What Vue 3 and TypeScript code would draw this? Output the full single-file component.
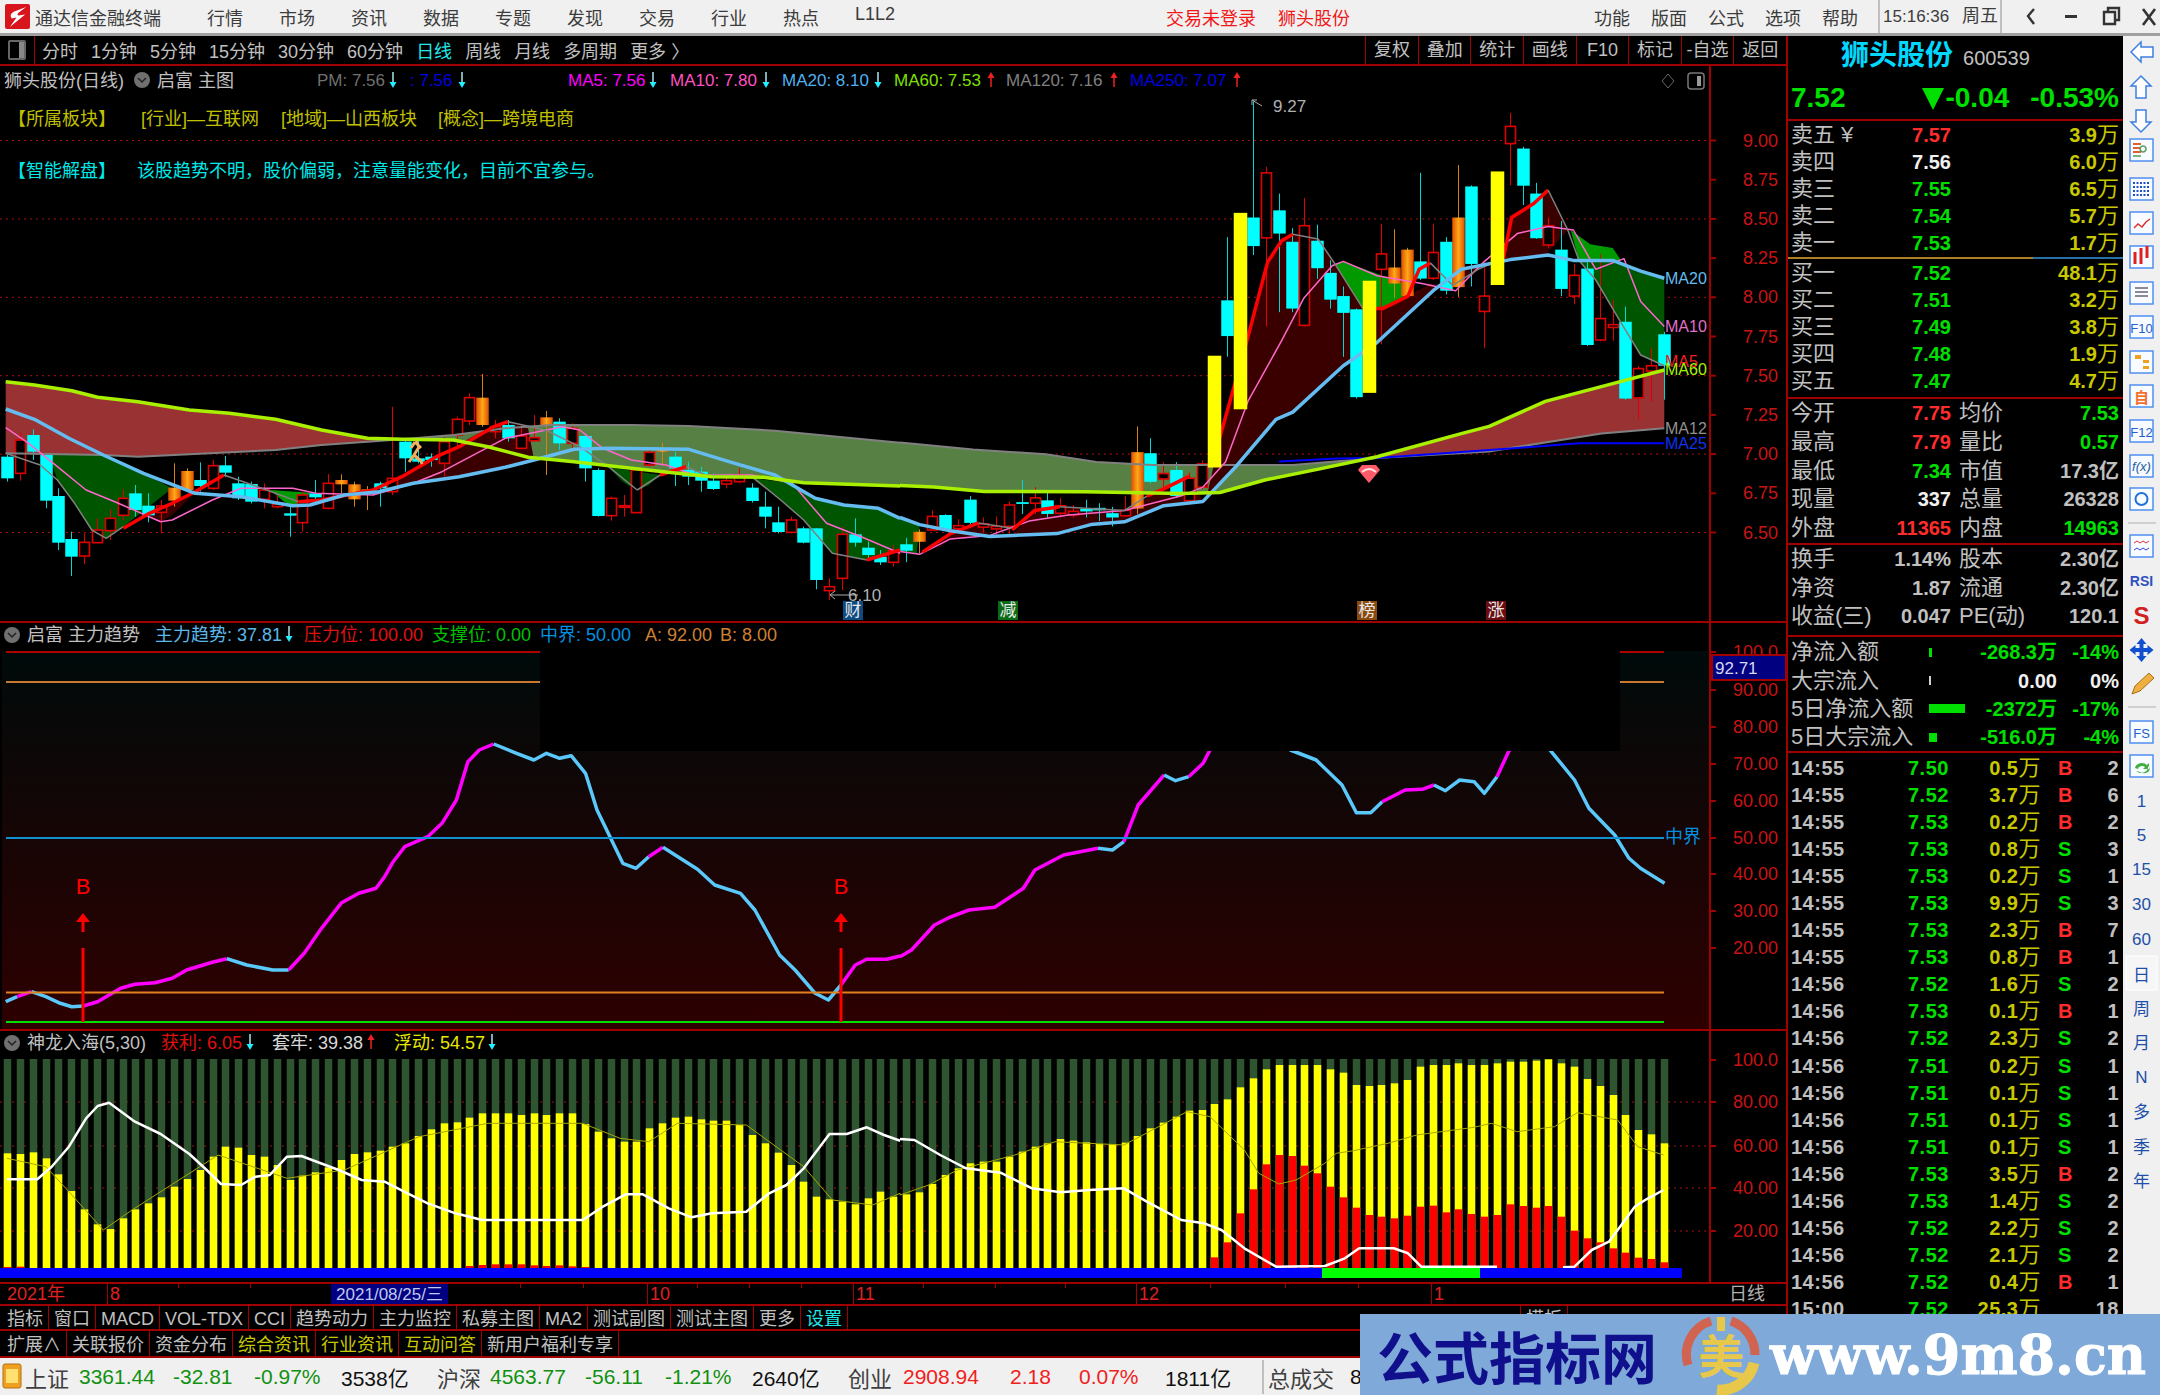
<template>
  <div class="terminal">
    <header class="titlebar">
      <svg class="logo" viewBox="0 0 26 26">
        <rect width="26" height="26" rx="2" fill="#d8141c" />
        <path d="M22 3 L9 8 Q4 11 7 15 L12 14 L5 24 L21 11 L14 12 Q12 11 14 9 Z" fill="#fff" />
      </svg>
      <span class="brand">通达信金融终端</span>
      <nav class="menu">
        <span v-for="m in menus" :key="m">{{ m }}</span>
      </nav>
      <span class="login">交易未登录</span>
      <span class="login stock-name">狮头股份</span>
      <nav class="menu menu-right">
        <span v-for="m in rightMenus" :key="m">{{ m }}</span>
      </nav>
      <span class="clock">15:16:36</span>
      <span class="weekday">周五</span>
      <svg class="win-btns" width="150" height="33" viewBox="0 0 150 33">
        <path d="M25 9 L19 16 L25 24" fill="none" stroke="#333" stroke-width="2.4" />
        <path d="M56 16.5 H68" stroke="#333" stroke-width="3" />
        <path d="M95 12 H106 V24 H95 Z M99 12 V8 H110 V20 H106" fill="none" stroke="#333" stroke-width="2.4" />
        <path d="M134 9 L146 25 M146 9 L134 25" stroke="#333" stroke-width="2.6" />
      </svg>
    </header>

    <div class="workspace">
      <section class="left-col">
        <div class="toolbar">
          <div class="tool-toggle"><span class="toggle-box"></span></div>
          <div class="periods">
            <span v-for="p in periods" :key="p" :class="{ 'c-cyan': p === '日线' }">{{ p }}</span>
            <span>更多 〉</span>
          </div>
          <div class="tool-btns">
            <span v-for="b in toolBtns" :key="b">{{ b }}</span>
          </div>
        </div>

        <svg class="chart" width="1786" height="1216" viewBox="0 66 1786 1216">
          <defs>
            <linearGradient id="subBg" x1="0" y1="0" x2="0" y2="1">
              <stop offset="0" stop-color="#000a0a" />
              <stop offset="1" stop-color="#2e0000" />
            </linearGradient>
            <linearGradient id="orangeBar" x1="0" y1="0" x2="1" y2="0">
              <stop offset="0" stop-color="#e05000" />
              <stop offset="0.5" stop-color="#ffa818" />
              <stop offset="1" stop-color="#e05000" />
            </linearGradient>
          </defs>

          <!-- main chart -->
          <line v-for="y in mainGrid" :key="'g' + y" x1="0" x2="1716" :y1="y" :y2="y" class="dots" />
          <polygon v-for="(f, i) in bands" :key="'b' + i" :points="f.pts" :fill="f.c" />
          <polygon v-for="(f, i) in mainFills" :key="'f' + i" :points="f.pts" :fill="f.c" />
          <g v-for="c in candles" :key="'c' + c.i">
            <line v-if="c.k !== 'y'" :x1="c.x" :x2="c.x" :y1="c.wt" :y2="c.wb" :stroke="c.wick" />
            <rect
              :x="c.x - c.w / 2"
              :y="c.top"
              :width="c.w"
              :height="c.h"
              :fill="c.fill"
              :stroke="c.k === 'r' ? '#e00000' : 'none'"
              :stroke-width="c.k === 'r' ? 1.6 : 0"
            />
          </g>
          <polyline v-for="(l, i) in mainLines" :key="'l' + i" :points="l.pts" :stroke="l.c" :stroke-width="l.w" class="ln" />
          <rect
            v-for="c in yellowCandles"
            :key="'y' + c.i"
            :x="c.x - c.w / 2"
            :y="c.top"
            :width="c.w"
            :height="c.h"
            fill="#ffff00"
          />
          <path d="M416 441 l3 6 l-5 8 l-5 7 m5 -7 l7 6 l1 3 m-7 -22 l-4 6 m4 -6 l6 6" fill="none" stroke="#f0b060" stroke-width="3" />
          <path d="M1362 465 H1376 L1380 470 L1369 483 L1358 470 Z" fill="#ff5a6a" />
          <path d="M1362 472 Q1369 466 1376 472" fill="none" stroke="#ffe0e0" stroke-width="2" />
          <path d="M1262 106 L1252 100 M1252 100 l0 5 m0 -5 l5 0" stroke="#aaa" fill="none" />
          <path d="M858 595 L830 595 m5 -4 l-5 4 l5 4" stroke="#aaa" fill="none" />
          <text x="1273" y="112" class="t17" fill="#b0b0b0">9.27</text>
          <text x="848" y="601" class="t17" fill="#b0b0b0">6.10</text>
          <g v-for="s in signals" :key="s.t">
            <rect :x="s.x - 10" y="601" width="20" height="19" :fill="s.c" />
            <text :x="s.x" y="616" text-anchor="middle" class="t17" fill="#e8e8e8">{{ s.t }}</text>
          </g>
          <text v-for="l in maLabels" :key="l.t" x="1665" :y="l.y" class="t16" :fill="l.c">{{ l.t }}</text>

          <!-- sub chart 1 -->
          <rect x="2" y="651" width="1708" height="378" fill="url(#subBg)" />
          <line x1="6" x2="1664" y1="652" y2="652" stroke="#b00000" stroke-width="2" />
          <line x1="6" x2="1664" y1="682" y2="682" stroke="#c87830" stroke-width="2" />
          <polyline v-for="(s, i) in trendLines" :key="'t' + i" :points="s.pts" :stroke="s.c" stroke-width="3.500" class="ln" />
          <rect x="540" y="623" width="1080" height="128" fill="#000" />
          <line x1="6" x2="1664" y1="838" y2="838" stroke="#1090d0" stroke-width="2" />
          <line x1="6" x2="1664" y1="992.5" y2="992.5" stroke="#e08020" stroke-width="2" />
          <line x1="6" x2="1664" y1="1022" y2="1022" stroke="#00e000" stroke-width="2" />
          <g v-for="x in buyMarks" :key="'m' + x">
            <line :x1="x" :x2="x" y1="948" y2="1022" stroke="#f00" stroke-width="3" />
            <path :d="`M${x} 913 l-7 9 h5.500 v10 h3 v-10 h5.500 Z`" fill="#f00" />
            <text :x="x" y="894" text-anchor="middle" class="t20" fill="#f00">B</text>
          </g>
          <text x="1665" y="843" class="t18" fill="#0090e0">中界</text>

          <!-- sub chart 2 -->
          <line v-for="y in sub2Grid" :key="'s' + y" x1="0" x2="1710" :y1="y" :y2="y" class="dots" />
          <g v-for="b in sub2Bars" :key="'v' + b.x">
            <rect :x="b.x - 3.75" y="1059" width="7.500" height="209" fill="#2e5530" />
            <rect :x="b.x - 3.75" :y="b.yellow" width="7.500" :height="1268 - b.yellow" fill="#ffff00" />
            <rect v-if="b.red" :x="b.x - 3.75" :y="b.red" width="7.500" :height="1268 - b.red" fill="#ff0000" />
          </g>
          <polyline :points="floatLine" stroke="#a8a800" stroke-width="1" class="ln" />
          <polyline v-for="(s, i) in whiteLines" :key="'w' + i" :points="s" stroke="#fff" stroke-width="2.500" class="ln" />
          <rect x="0" y="1268" width="1682" height="10" fill="#0000ff" />
          <rect x="1322" y="1268" width="158" height="10" fill="#00ff00" />

          <!-- axes and frames -->
          <line x1="1710" x2="1710" y1="66" y2="1282" class="frame" />
          <line x1="0" x2="1786" y1="622" y2="622" class="frame" />
          <line x1="0" x2="1786" y1="1030" y2="1030" class="frame" />
          <g v-for="a in axisLabels" :key="'a' + a.t + a.y">
            <line x1="1711" x2="1716" :y1="a.y" :y2="a.y" class="frame" />
            <text x="1778" :y="a.y + 6" text-anchor="end" class="t18" fill="#c81414">{{ a.t }}</text>
          </g>
          <rect x="1712" y="655" width="74" height="25" fill="#000080" stroke="#a00000" stroke-width="2" />
          <text x="1715" y="674" class="t17" fill="#d8d8f0">92.71</text>

          <!-- legends -->
          <text v-for="t in legends" :key="t.x + t.t" :x="t.x" :y="t.y" :class="t.s ?? 't17'" :fill="t.c">{{ t.t }}</text>
          <g v-for="a in arrows" :key="'r' + a.x + a.y">
            <path v-if="a.up" :d="`M${a.x} ${a.y + 15} V${a.y + 4}`" stroke="#f02020" stroke-width="1.500" />
            <path v-if="a.up" :d="`M${a.x - 3.5} ${a.y + 6} L${a.x} ${a.y} L${a.x + 3.5} ${a.y + 6} Z`" fill="#f02020" />
            <path v-if="!a.up" :d="`M${a.x} ${a.y} V${a.y + 11}`" stroke="#a8e8f0" stroke-width="1.500" />
            <path v-if="!a.up" :d="`M${a.x - 3.5} ${a.y + 10} L${a.x} ${a.y + 16} L${a.x + 3.5} ${a.y + 10} Z`" fill="#20f0ff" />
          </g>
          <g v-for="y in [80, 635, 1043]" :key="'k' + y">
            <circle :cx="y === 80 ? 142 : 12" :cy="y" r="8" fill="#707070" />
            <path :d="`M${(y === 80 ? 142 : 12) - 4} ${y - 2} l4 4 l4 -4`" stroke="#222" stroke-width="1.500" fill="none" />
          </g>
          <path d="M1668 74 l6 7 l-6 7 l-6 -7 Z" stroke="#666" fill="none" />
          <rect x="1688" y="73" width="16" height="16" rx="3" fill="none" stroke="#777" stroke-width="1.500" />
          <rect x="1697" y="76" width="4" height="10" fill="#999" />
        </svg>

        <div class="date-row">
          <em v-for="x in dateTicks" :key="x" class="date-tick" :style="{ left: x + 'px' }"></em>
          <span class="date-year">2021年</span>
          <span class="date-mark m8">8</span>
          <span class="date-cur">2021/08/25/三</span>
          <span class="date-mark m10">10</span>
          <span class="date-mark m11">11</span>
          <span class="date-mark m12">12</span>
          <span class="date-mark m1">1</span>
          <span class="date-kind">日线</span>
        </div>
        <div class="tabs">
          <span v-for="t in tabs1" :key="t" :class="{ 'c-cyan': t === '设置' }">{{ t }}</span>
          <span class="tab-tail">模板</span>
        </div>
        <div class="tabs tabs-last">
          <span v-for="t in tabs2" :key="t" :class="{ 'c-yellow': yellowTabs.includes(t) }">{{ t }}</span>
        </div>
      </section>

      <aside class="quote">
        <div class="q-name"><span class="q-title">狮头股份</span><span class="q-code">600539</span></div>
        <div class="q-price">
          <span>7.52</span>
          <span class="q-change"><svg width="22" height="24" viewBox="0 0 22 24"><path d="M0 2 H22 L11 24 Z" fill="#00e000" /></svg>-0.04</span>
          <span>-0.53%</span>
        </div>
        <div class="q-sec q-asks">
          <div v-for="r in asks" :key="r[0]" class="q-row">
            <span class="lb">{{ r[0] }}</span>
            <b class="px" :class="r[3]">{{ r[1] }}</b>
            <b class="vol c-yellow">{{ r[2] }}<i>万</i></b>
          </div>
        </div>
        <div class="q-sec q-bids">
          <div v-for="r in bids" :key="r[0]" class="q-row">
            <span class="lb">{{ r[0] }}</span>
            <b class="px c-green">{{ r[1] }}</b>
            <b class="vol c-yellow">{{ r[2] }}<i>万</i></b>
          </div>
        </div>
        <div class="q-sec q-stats">
          <div v-for="r in stats1" :key="r[0]" class="stat-row">
            <div><span class="lb">{{ r[0] }}</span><b :class="r[2]">{{ r[1] }}</b></div>
            <div><span class="lb">{{ r[3] }}</span><b :class="r[5]">{{ r[4] }}</b></div>
          </div>
        </div>
        <div class="q-sec q-stats2">
          <div v-for="r in stats2" :key="r[0]" class="stat-row stat-tight">
            <div><span class="lb">{{ r[0] }}</span><b class="c-gray">{{ r[1] }}</b></div>
            <div><span class="lb">{{ r[2] }}</span><b class="c-gray">{{ r[3] }}</b></div>
          </div>
        </div>
        <div class="q-sec q-flow">
          <div v-for="r in flows" :key="r.l" class="flow-row">
            <span class="lb">{{ r.l }}</span>
            <span class="flow-val">
              <em class="flow-bar" :style="{ width: r.w + 'px', background: r.bar }"></em>
              <b :class="r.c">{{ r.v }}</b>
            </span>
            <b :class="r.c">{{ r.p }}</b>
          </div>
        </div>
        <div class="ticks">
          <div v-for="(t, i) in ticks" :key="i" class="tick">
            <b class="c-gray">{{ t[0] }}</b>
            <b class="c-green">{{ t[1] }}</b>
            <b class="c-yellow tick-vol">{{ t[2] }}<i>万</i></b>
            <b class="tick-bs" :class="t[3] === 'B' ? 'c-red' : 'c-green'">{{ t[3] }}</b>
            <b class="c-gray tick-n">{{ t[4] }}</b>
          </div>
        </div>
      </aside>

      <aside class="sidebar">
        <svg width="37" height="1322" viewBox="0 36 37 1322" class="side-svg">
          <g fill="#fff" stroke="#3f7fe0" stroke-width="1.500">
            <path d="M8 52 L18 42 V47 H30 V57 H18 V62 Z" />
            <path d="M18 76 L28 86 H23 V98 H13 V86 H8 Z" />
            <path d="M18 132 L28 122 H23 V110 H13 V122 H8 Z" />
          </g>
          <g fill="#f8fbff" stroke="#4f8ff0" stroke-width="1.500">
            <rect v-for="y in iconBoxes" :key="y" x="7" :y="y - 11" width="23" height="22" />
          </g>
          <path d="M10 144 h8 m-8 4 h8 m-8 4 h8" stroke="#e06030" stroke-width="2" />
          <path d="M20 152 a3 3 0 1 1 0.100 0 M10 156 h8" stroke="#50a050" stroke-width="1.500" fill="none" />
          <path d="M10 183 h17 m-17 4 h17 m-17 4 h17 m-17 4 h17" stroke="#2050c0" stroke-width="2" stroke-dasharray="2 1.500" />
          <path d="M11 228 l4 -4 l4 3 l4 -5 l4 -3" stroke="#e03030" fill="none" stroke-width="1.500" />
          <path d="M12 252 v12 m6 -16 v16 m6 -18 v12" stroke="#e02020" stroke-width="3" />
          <path d="M12 288 h13 m-13 4 h13 m-13 4 h13" stroke="#667" stroke-width="1.500" />
          <text x="18.500" y="333" text-anchor="middle" class="side-t" fill="#2060d0">F10</text>
          <path d="M12 355 h6 v4 h-6 Z M20 360 h6 v3 h-6 Z M20 366 h6 v3 h-6 Z" fill="#f0a020" />
          <text x="18.500" y="403" text-anchor="middle" class="side-c" fill="#f07030">自</text>
          <text x="18.500" y="437" text-anchor="middle" class="side-t" fill="#2060d0">F12</text>
          <text x="18.500" y="471" text-anchor="middle" class="side-t" fill="#2060a0" font-style="italic">f(x)</text>
          <circle cx="18.500" cy="499" r="6" fill="none" stroke="#2070e0" stroke-width="2" />
          <line x1="5" x2="33" y1="523" y2="523" stroke="#b0b0b0" />
          <path d="M11 543 l3 -2 l3 2 l3 -2 l3 2 l3 -2" stroke="#e03030" fill="none" />
          <path d="M11 550 l3 -2 l3 2 l3 -2 l3 2 l3 -2" stroke="#3040e0" fill="none" />
          <text x="18.500" y="586" text-anchor="middle" class="side-r" fill="#3050c0">RSI</text>
          <text x="18.500" y="624" text-anchor="middle" class="side-s" fill="#d02020">S</text>
          <path d="M18.500 638 l5 6 h-3 v4 h4 v-3 l6 5 l-6 5 v-3 h-4 v4 h3 l-5 6 l-5 -6 h3 v-4 h-4 v3 l-6 -5 l6 -5 v3 h4 v-4 h-3 Z" fill="#1050d0" />
          <path d="M9 694 l3 -8 l14 -13 l5 5 l-14 13 Z" fill="#f0b040" stroke="#a07020" />
          <line x1="5" x2="33" y1="707" y2="707" stroke="#b0b0b0" />
          <rect x="7" y="721" width="23" height="22" fill="#f8fbff" stroke="#4f8ff0" stroke-width="1.500" />
          <text x="18.500" y="738" text-anchor="middle" class="side-t" fill="#2060d0">FS</text>
          <rect x="7" y="755" width="23" height="22" fill="#f8fbff" stroke="#4f8ff0" stroke-width="1.500" />
          <path d="M12 768 a7 6 0 0 1 12 -3 l2 -2 v6 h-6 l2 -2 a4 3 0 0 0 -7 2 Z M25 766 a7 6 0 0 1 -12 5 l4 1 a4 3 0 0 0 8 -6 Z" fill="#40b040" />
          <rect x="3" y="956" width="31" height="34" fill="#f6f6f6" stroke="#fff" />
          <text v-for="t in sideLabels" :key="t.t" x="18.500" :y="t.y + 7" text-anchor="middle" class="side-n" fill="#1e4fa8">{{ t.t }}</text>
        </svg>
      </aside>
    </div>

    <footer class="statusbar">
      <svg class="status-icon" width="20" height="26" viewBox="0 0 20 26">
        <rect x="1" y="1" width="18" height="24" rx="2" fill="#f0a020" stroke="#b07010" />
        <rect x="4" y="6" width="12" height="14" fill="#ffe070" />
      </svg>
      <span v-for="(s, i) in statusItems" :key="i" :class="s[1]">{{ s[0] }}</span>
    </footer>

    <div class="watermark">
      <span class="wm-cn">公式指标网</span>
      <svg class="wm-logo" width="80" height="80" viewBox="0 0 80 80">
        <path d="M7 50 A35 35 0 0 1 30 6" fill="none" stroke="#d06450" stroke-width="9" />
        <path d="M50 6 A35 35 0 0 1 74 40" fill="none" stroke="#d06450" stroke-width="9" />
        <path d="M73 48 A35 35 0 0 1 36 75" fill="none" stroke="#e8c84a" stroke-width="11" />
        <text x="40" y="58" text-anchor="middle" class="wm-glyph" fill="#e8c84a">美</text>
        <rect x="36" y="2" width="8" height="14" fill="#e8c84a" />
      </svg>
      <span class="wm-url">www.9m8.cn</span>
    </div>
  </div>
</template>

<script setup lang="ts">
type Fn = (x: number, y: number) => [number, number]

const z7: Fn = (x, y) => [x / 1.742, 360 + y / 3]
const z8: Fn = (x, y) => [900 + x / 1.782, 80 + y / 2.8]
const z9: Fn = (x, y) => [x / 1.742, 620 + y / 3]
const z10: Fn = (x, y) => [900 + x / 1.742, 620 + y / 3]
const z11: Fn = (x, y) => [x / 1.742, 1030 + y / 3]
const z12: Fn = (x, y) => [900 + x / 1.742, 1030 + y / 3]

const pts = (fn: Fn, flat: number[]) => {
  const out: string[] = []
  for (let i = 0; i < flat.length; i += 2) {
    const [x, y] = fn(flat[i], flat[i + 1])
    out.push(`${x.toFixed(1)},${y.toFixed(1)}`)
  }
  return out.join(' ')
}

const menus = ['行情', '市场', '资讯', '数据', '专题', '发现', '交易', '行业', '热点', 'L1L2']
const rightMenus = ['功能', '版面', '公式', '选项', '帮助']
const periods = ['分时', '1分钟', '5分钟', '15分钟', '30分钟', '60分钟', '日线', '周线', '月线', '多周期']
const toolBtns = ['复权', '叠加', '统计', '画线', 'F10', '标记', '-自选', '返回']
const tabs1 = ['指标', '窗口', 'MACD', 'VOL-TDX', 'CCI', '趋势动力', '主力监控', '私募主图', 'MA2', '测试副图', '测试主图', '更多', '设置']
const tabs2 = ['扩展∧', '关联报价', '资金分布', '综合资讯', '行业资讯', '互动问答', '新用户福利专享']
const yellowTabs = ['综合资讯', '行业资讯', '互动问答']
const dateTicks = [178, 250, 520, 583, 697, 749, 801, 923, 995, 1065, 1210, 1285, 1358]

// candle: kind, body top, body bottom, wick top, wick bottom (zoomed coordinates)
type Raw = [string, number, number, number, number]
const rawLeft: Raw[] = [
  ['c', 290, 355, 285, 365], ['r', 240, 340, 215, 362], ['c', 225, 275, 208, 300], ['c', 285, 422, 285, 445],
  ['c', 408, 548, 385, 570], ['c', 537, 590, 515, 648], ['r', 547, 588, 520, 612], ['r', 510, 548, 475, 550],
  ['r', 475, 512, 447, 540], ['r', 415, 466, 388, 480], ['c', 400, 450, 375, 470], ['c', 437, 466, 400, 487],
  ['r', 438, 457, 420, 520], ['o', 383, 422, 310, 440], ['o', 333, 390, 325, 395], ['c', 360, 378, 307, 395],
  ['r', 317, 385, 300, 390], ['c', 316, 338, 288, 350], ['c', 370, 415, 350, 420], ['c', 372, 425, 365, 430],
  ['r', 390, 418, 370, 445], ['r', 432, 440, 400, 445], ['c', 460, 467, 440, 530], ['r', 405, 488, 395, 515],
  ['c', 400, 412, 360, 420], ['r', 370, 445, 342, 448], ['o', 360, 373, 343, 400], ['o', 373, 418, 365, 440],
  ['o', 388, 402, 378, 450], ['c', 370, 385, 365, 440], ['r', 355, 395, 140, 405], ['c', 245, 295, 235, 335],
  ['c', 295, 305, 235, 310], ['c', 290, 300, 280, 320], ['r', 245, 310, 230, 350], ['r', 178, 225, 170, 265],
  ['r', 113, 183, 100, 195], ['o', 113, 195, 42, 200], ['r', 200, 215, 180, 235], ['c', 195, 235, 180, 245],
  ['r', 228, 265, 195, 267], ['r', 233, 242, 165, 245], ['o', 172, 198, 153, 345], ['c', 185, 250, 175, 270],
  ['r', 205, 250, 190, 270], ['c', 228, 325, 220, 365], ['c', 330, 468, 325, 470], ['r', 415, 467, 410, 482],
  ['r', 437, 442, 405, 470], ['r', 330, 458, 325, 460], ['r', 277, 315, 270, 320], ['o', 267, 275, 248, 318],
  ['c', 290, 325, 275, 378], ['c', 330, 350, 305, 375], ['c', 335, 362, 320, 395], ['c', 362, 387, 340, 390],
  ['r', 362, 372, 345, 385], ['r', 345, 365, 325, 370], ['c', 383, 423, 370, 428], ['c', 440, 470, 395, 505],
  ['c', 487, 516, 440, 520], ['r', 480, 517, 470, 520], ['c', 505, 548, 500, 550], ['c', 505, 660, 505, 688],
  ['r', 680, 692, 655, 720], ['r', 523, 655, 500, 690], ['c', 523, 548, 475, 560], ['c', 563, 585, 545, 595],
  ['c', 590, 607, 570, 615], ['r', 572, 607, 555, 620],
]
const rawRight: Raw[] = [
  ['c', 1300, 1318, 1282, 1350], ['o', 1265, 1293, 1258, 1325], ['r', 1222, 1260, 1205, 1262], ['c', 1218, 1258, 1216, 1260],
  ['r', 1248, 1256, 1230, 1262], ['c', 1175, 1240, 1165, 1245], ['r', 1243, 1252, 1225, 1268], ['r', 1250, 1257, 1222, 1275],
  ['r', 1190, 1250, 1180, 1275], ['c', 1182, 1187, 1120, 1215], ['r', 1170, 1185, 1140, 1215], ['c', 1177, 1215, 1155, 1225],
  ['r', 1192, 1213, 1170, 1225], ['r', 1208, 1218, 1190, 1225], ['c', 1200, 1208, 1175, 1225], ['c', 1198, 1205, 1185, 1235],
  ['c', 1213, 1225, 1195, 1250], ['r', 1205, 1220, 1165, 1222], ['o', 1042, 1200, 970, 1215], ['c', 1045, 1125, 1003, 1130],
  ['r', 1102, 1117, 1070, 1150], ['c', 1092, 1165, 1070, 1170], ['r', 1115, 1178, 1100, 1180], ['r', 1075, 1140, 1065, 1145],
  ['y', 772, 1085, 772, 1085], ['c', 617, 717, 440, 775], ['y', 372, 922, 372, 922], ['c', 385, 465, 60, 490],
  ['r', 260, 442, 243, 690], ['c', 365, 430, 318, 650], ['c', 453, 640, 415, 650], ['r', 408, 687, 330, 690],
  ['c', 450, 527, 405, 557], ['c', 540, 615, 505, 640], ['c', 605, 652, 578, 775], ['c', 642, 888, 640, 892],
  ['y', 562, 876, 562, 876], ['r', 487, 530, 403, 740], ['o', 525, 570, 418, 610], ['o', 475, 605, 470, 608],
  ['c', 508, 556, 260, 560], ['r', 483, 555, 402, 560], ['c', 453, 590, 440, 600], ['o', 385, 580, 238, 607],
  ['c', 298, 515, 295, 578], ['r', 605, 648, 510, 750], ['y', 256, 574, 256, 574], ['r', 130, 178, 92, 295],
  ['c', 192, 296, 187, 350], ['c', 318, 443, 288, 445], ['r', 408, 462, 385, 470], ['c', 475, 585, 395, 605],
  ['r', 547, 605, 515, 628], ['c', 528, 742, 510, 745], ['r', 668, 728, 488, 732], ['r', 685, 693, 615, 730],
  ['c', 677, 892, 635, 895], ['r', 808, 890, 800, 950], ['r', 800, 815, 750, 902], ['c', 712, 800, 705, 895],
]

const toCandle = (r: Raw, i: number, fn: Fn) => {
  const [, top] = fn(0, r[1])
  const [, bot] = fn(0, r[2])
  const [, wt] = fn(0, r[3])
  const [, wb] = fn(0, r[4])
  const k = r[0]
  const fills: Record<string, string> = { c: '#00ffff', r: '#000', o: 'url(#orangeBar)', y: '#ffff00' }
  const wicks: Record<string, string> = { c: '#00d8d8', r: '#e00000', o: '#d88010', y: '#ffff00' }
  const w = k === 'r' ? 10 : k === 'y' ? 13.5 : 12.5
  return { i, k, x: Math.round(7 + 12.845 * i) + 0.5, top, h: bot - top, wt, wb, w, fill: fills[k], wick: wicks[k] }
}

const candles = [
  ...rawLeft.map((r, i) => toCandle(r, i, z7)),
  ...rawRight.map((r, i) => toCandle(r, i + 70, z8)),
].filter((c) => c.k !== 'y')
const yellowCandles = rawRight.map((r, i) => toCandle(r, i + 70, z8)).filter((c) => c.k === 'y')

const mainGrid = [140.5, 218.9, 297.3, 375.7, 454.1, 532.5]
const sub2Grid = [1102, 1146, 1188, 1231]

const bands = [
  { c: '#993333', pts: pts(z7, [10, 65, 60, 75, 125, 92, 170, 112, 240, 125, 330, 150, 400, 160, 480, 178, 560, 210, 640, 235, 700, 238, 640, 245, 560, 255, 480, 270, 330, 283, 240, 290, 180, 285, 10, 280]) },
  { c: '#568044', pts: pts(z7, [700, 238, 790, 225, 880, 205, 960, 195, 1100, 195, 1200, 198, 1350, 212, 1568, 248, 1568, 378, 1400, 368, 1330, 352, 1240, 350, 1180, 340, 1100, 325, 1000, 305, 920, 292, 850, 260, 790, 240]) },
  { c: '#568044', pts: pts(z8, [0, 1015, 130, 1035, 260, 1048, 350, 1070, 450, 1078, 600, 1078, 700, 1078, 835, 1062, 750, 1088, 650, 1120, 570, 1155, 500, 1158, 330, 1153, 150, 1152, 60, 1140, 0, 1135]) },
  { c: '#993333', pts: pts(z8, [835, 1062, 1050, 1040, 1150, 1015, 1250, 990, 1362, 975, 1362, 812, 1270, 850, 1150, 900, 1050, 970, 1000, 990, 850, 1055]) },
]

const mainFills = [
  { c: '#005500', pts: pts(z7, [85, 285, 180, 285, 250, 340, 300, 385, 215, 500, 185, 535, 160, 510, 130, 430, 100, 360]) },
  { c: '#3a0000', pts: pts(z7, [215, 505, 300, 430, 390, 345, 340, 398, 300, 465, 280, 485, 250, 470]) },
  { c: '#009900', pts: pts(z7, [470, 390, 540, 398, 530, 425, 510, 437, 495, 425]) },
  { c: '#3a0000', pts: pts(z7, [660, 385, 760, 290, 860, 195, 885, 185, 920, 205, 930, 298, 880, 322, 800, 350, 720, 370]) },
  { c: '#005500', pts: pts(z7, [1060, 322, 1150, 345, 1130, 375, 1110, 392, 1085, 365]) },
  { c: '#005500', pts: pts(z7, [1310, 355, 1380, 368, 1420, 415, 1470, 435, 1530, 445, 1568, 475, 1568, 570, 1510, 600, 1450, 580, 1400, 480, 1360, 420]) },
  { c: '#005500', pts: pts(z8, [0, 1225, 35, 1245, 30, 1325, 0, 1320]) },
  { c: '#3a0000', pts: pts(z8, [60, 1320, 90, 1270, 140, 1240, 160, 1275, 90, 1285]) },
  { c: '#3a0000', pts: pts(z8, [200, 1275, 240, 1205, 285, 1195, 400, 1205, 470, 1145, 515, 1110, 540, 1180, 470, 1192, 400, 1237, 340, 1245, 280, 1270]) },
  { c: '#3a0000', pts: pts(z8, [545, 1180, 570, 1000, 620, 700, 650, 520, 680, 450, 700, 432, 745, 445, 775, 515, 825, 640, 860, 640, 905, 605, 945, 570, 985, 575, 1030, 530, 1075, 500, 1085, 380, 1130, 345, 1155, 308, 1190, 420, 1150, 490, 1090, 503, 1000, 530, 950, 590, 850, 735, 790, 800, 700, 930, 670, 950, 600, 1080]) },
  { c: '#009900', pts: pts(z8, [775, 515, 790, 508, 860, 548, 905, 575, 900, 605, 860, 640, 825, 640]) },
  { c: '#009900', pts: pts(z8, [1195, 420, 1230, 460, 1270, 470, 1285, 505, 1210, 505]) },
  { c: '#005500', pts: pts(z8, [1210, 505, 1270, 505, 1320, 535, 1362, 555, 1362, 800, 1320, 770, 1285, 680, 1240, 560]) },
]

const RED = '#ff0000'
const GREY = '#808080'
const mainLines = [
  // thin MA120 / MA250
  { c: GREY, w: 2, pts: pts(z7, [10, 280, 180, 285, 240, 290, 330, 283, 480, 270, 560, 255, 640, 245, 700, 238, 790, 225, 880, 205, 960, 195, 1100, 195, 1200, 198, 1350, 212, 1568, 248]) },
  { c: GREY, w: 2, pts: pts(z8, [0, 1015, 130, 1035, 260, 1048, 350, 1070, 450, 1078, 700, 1078, 850, 1058, 1050, 1040, 1150, 1015, 1250, 990, 1362, 975]) },
  { c: '#0000ff', w: 2, pts: pts(z8, [675, 1068, 780, 1060, 850, 1058, 1000, 1042, 1100, 1030, 1210, 1017, 1362, 1017]) },
  // MA10
  { c: '#ff66cc', w: 1.5, pts: pts(z7, [10, 203, 50, 250, 100, 320, 150, 390, 200, 425, 280, 485, 300, 480, 370, 420, 420, 385, 510, 385, 550, 400, 650, 405, 720, 370, 770, 335, 830, 280, 880, 235, 980, 200, 1010, 210, 1050, 265, 1100, 300, 1160, 315, 1210, 345, 1310, 345, 1380, 370, 1440, 490, 1500, 530, 1568, 580]) },
  { c: '#ff66cc', w: 1.5, pts: pts(z8, [0, 1320, 35, 1328, 90, 1285, 160, 1275, 230, 1235, 300, 1218, 400, 1205, 500, 1165, 540, 1140, 580, 1070, 620, 900, 680, 730, 720, 610, 770, 520, 790, 508, 850, 548, 930, 570, 990, 590, 1040, 510, 1100, 430, 1155, 410, 1200, 420, 1240, 530, 1290, 500, 1320, 620, 1362, 690]) },
  // MA5, grey while falling, red while rising
  { c: GREY, w: 1.5, pts: pts(z7, [10, 280, 70, 315, 100, 360, 130, 430, 160, 510, 185, 535, 215, 500]) },
  { c: RED, w: 3.5, pts: pts(z7, [215, 505, 260, 460, 300, 430, 340, 395, 390, 345]) },
  { c: GREY, w: 1.5, pts: pts(z7, [390, 345, 440, 375, 480, 400, 520, 425]) },
  { c: RED, w: 3.5, pts: pts(z7, [520, 425, 560, 420, 650, 390, 700, 350, 760, 290, 800, 260, 860, 200, 885, 185]) },
  { c: GREY, w: 1.5, pts: pts(z7, [885, 185, 950, 210, 1010, 260, 1060, 320, 1110, 390]) },
  { c: GREY, w: 1.5, pts: pts(z7, [1110, 390, 1150, 345, 1195, 320, 1230, 345, 1310, 350, 1360, 420, 1400, 480, 1450, 580, 1510, 600]) },
  { c: RED, w: 3.5, pts: pts(z7, [1150, 345, 1195, 320]) },
  { c: RED, w: 3.5, pts: pts(z7, [1510, 600, 1568, 570]) },
  { c: RED, w: 3.5, pts: pts(z8, [40, 1322, 90, 1270, 140, 1240]) },
  { c: GREY, w: 1.5, pts: pts(z8, [140, 1240, 200, 1255]) },
  { c: RED, w: 3.5, pts: pts(z8, [200, 1260, 240, 1205, 285, 1195]) },
  { c: GREY, w: 1.5, pts: pts(z8, [285, 1195, 400, 1205, 440, 1165]) },
  { c: RED, w: 3.5, pts: pts(z8, [440, 1165, 470, 1145, 515, 1110]) },
  { c: RED, w: 3.5, pts: pts(z8, [570, 1000, 620, 720, 655, 510, 680, 450, 700, 432]) },
  { c: GREY, w: 1.5, pts: pts(z8, [700, 432, 745, 445, 775, 515, 825, 640]) },
  { c: RED, w: 3.5, pts: pts(z8, [825, 640, 860, 640, 905, 605, 925, 530, 945, 512]) },
  { c: GREY, w: 1.5, pts: pts(z8, [945, 512, 985, 575, 1030, 530, 1075, 500]) },
  { c: RED, w: 3.5, pts: pts(z8, [1075, 500, 1090, 385, 1130, 345, 1155, 308]) },
  { c: GREY, w: 1.5, pts: pts(z8, [1155, 308, 1190, 420, 1210, 505, 1240, 560, 1285, 680, 1320, 770, 1362, 800]) },
  // MA20
  { c: '#64bcf0', w: 3.5, pts: pts(z7, [10, 147, 60, 178, 120, 235, 180, 285, 250, 340, 340, 400, 420, 410, 510, 437, 540, 435, 600, 405, 660, 395, 720, 370, 800, 350, 880, 322, 930, 300, 1000, 268, 1060, 265, 1200, 268, 1270, 305, 1350, 345, 1420, 415, 1470, 435, 1530, 445, 1568, 475]) },
  { c: '#64bcf0', w: 3.5, pts: pts(z8, [0, 1225, 35, 1245, 90, 1262, 160, 1278, 280, 1270, 340, 1245, 400, 1237, 470, 1192, 540, 1180, 600, 1080, 670, 950, 700, 930, 790, 800, 850, 735, 950, 590, 1000, 530, 1088, 503, 1155, 490, 1200, 505, 1270, 505, 1320, 535, 1362, 555]) },
  // MA60
  { c: '#a8f000', w: 3.5, pts: pts(z7, [10, 65, 60, 75, 125, 92, 170, 112, 240, 125, 330, 150, 400, 160, 480, 178, 560, 210, 640, 235, 700, 238, 790, 240, 850, 260, 920, 292, 1000, 305, 1100, 325, 1180, 340, 1240, 350, 1330, 352, 1400, 368, 1568, 378]) },
  { c: '#a8f000', w: 3.5, pts: pts(z8, [0, 1135, 60, 1140, 150, 1152, 330, 1153, 500, 1158, 570, 1155, 650, 1120, 750, 1088, 850, 1055, 1000, 990, 1050, 970, 1150, 900, 1270, 850, 1362, 812]) },
]

const signals = [
  { t: '财', x: 853, c: '#0d4a80' },
  { t: '减', x: 1008, c: '#0b6a14' },
  { t: '榜', x: 1367, c: '#8a4a10' },
  { t: '涨', x: 1496, c: '#6a0c10' },
]

const maLabels = [
  { t: 'MA20', y: 284, c: '#64bcf0' },
  { t: 'MA10', y: 332, c: '#e070c8' },
  { t: 'MA5', y: 367, c: '#f02020' },
  { t: 'MA60', y: 375, c: '#a8f000' },
  { t: 'MA12', y: 434, c: '#909090' },
  { t: 'MA25', y: 449, c: '#1030f0' },
]

const PINK = '#ff00ff'
const SKY = '#5ac8fa'
const trendLines = [
  { c: SKY, pts: pts(z9, [10, 1145, 30, 1130]) },
  { c: PINK, pts: pts(z9, [30, 1130, 55, 1115]) },
  { c: SKY, pts: pts(z9, [55, 1115, 80, 1130, 105, 1150, 125, 1160, 145, 1158]) },
  { c: PINK, pts: pts(z9, [145, 1158, 170, 1145, 210, 1105, 235, 1093, 270, 1088, 300, 1075, 325, 1050, 370, 1027, 395, 1016]) },
  { c: SKY, pts: pts(z9, [395, 1016, 430, 1035, 475, 1050, 503, 1050]) },
  { c: PINK, pts: pts(z9, [503, 1050, 530, 1000, 560, 925, 595, 848, 625, 820, 655, 805, 670, 770, 685, 725, 705, 680, 745, 650, 770, 610, 795, 540, 815, 425, 835, 390, 860, 372]) },
  { c: SKY, pts: pts(z9, [860, 372, 900, 400, 930, 420, 952, 400, 975, 415, 995, 407, 1020, 460, 1040, 570, 1085, 730, 1108, 745, 1130, 710]) },
  { c: PINK, pts: pts(z9, [1130, 710, 1155, 682]) },
  { c: SKY, pts: pts(z9, [1155, 682, 1215, 748, 1245, 795, 1290, 820, 1315, 870, 1358, 1005, 1385, 1050, 1420, 1120, 1443, 1140, 1465, 1095]) },
  { c: PINK, pts: pts(z9, [1465, 1095, 1490, 1035, 1510, 1018, 1545, 1018, 1568, 1008]) },
  { c: PINK, pts: pts(z10, [0, 1010, 20, 990, 60, 915, 85, 893, 120, 870, 165, 862, 215, 805, 235, 750, 285, 705, 345, 685]) },
  { c: SKY, pts: pts(z10, [345, 685, 370, 690, 390, 665]) },
  { c: PINK, pts: pts(z10, [390, 665, 415, 555, 460, 465]) },
  { c: SKY, pts: pts(z10, [460, 465, 480, 482, 503, 470]) },
  { c: PINK, pts: pts(z10, [503, 470, 528, 430, 540, 390, 570, 335, 595, 270]) },
  { c: SKY, pts: pts(z10, [595, 270, 640, 295, 680, 390, 725, 420, 770, 495, 795, 578, 820, 578, 840, 545]) },
  { c: PINK, pts: pts(z10, [840, 545, 880, 510, 910, 508, 930, 495]) },
  { c: SKY, pts: pts(z10, [930, 495, 950, 512, 975, 480, 1000, 485, 1018, 520, 1040, 470]) },
  { c: PINK, pts: pts(z10, [1040, 470, 1060, 395, 1085, 340]) },
  { c: SKY, pts: pts(z10, [1085, 340, 1130, 385, 1175, 480, 1200, 565, 1245, 645, 1270, 715, 1290, 745, 1332, 790]) },
]
const buyMarks = [83, 841]

const yellowTops = [
  370, 372, 367, 385, 433, 483, 538, 583, 597, 565, 538, 520, 502, 470, 447, 420, 380, 350, 353, 375,
  380, 405, 450, 437, 427, 412, 390, 372, 367, 362, 350, 340, 318, 298, 280, 277, 263, 250, 250, 250,
  255, 250, 255, 250, 250, 282, 305, 325, 335, 335, 295, 280, 263, 260, 268, 272, 272, 285, 315, 340,
  368, 405, 455, 500, 508, 515, 523, 505, 485, 500,
  493, 487, 462, 435, 415, 400, 395, 395, 380, 365, 350, 340, 327, 332, 337, 342, 342, 338, 318, 295,
  278, 260, 242, 240, 222, 208, 172, 145, 118, 105, 105, 105, 105, 118, 128, 165, 168, 165, 160, 150,
  110, 105, 105, 100, 105, 105, 100, 95, 95, 92, 88, 100, 110, 147, 168, 195, 255, 300, 313, 340,
]
const redTops: Record<number, number> = {
  0: 711, 1: 710, 36: 708, 37: 705, 38: 703, 39: 703, 40: 703, 41: 706, 42: 708, 43: 706, 44: 709, 45: 711,
  94: 682, 95: 637, 96: 550, 97: 478, 98: 403, 99: 375, 100: 378, 101: 407, 102: 430, 103: 470, 104: 502,
  105: 533, 106: 555, 107: 560, 108: 565, 109: 557, 110: 530, 111: 527, 112: 547, 113: 538, 114: 552,
  115: 560, 116: 555, 117: 523, 118: 528, 119: 533, 120: 528, 121: 560, 122: 602, 123: 625, 124: 637,
  125: 655, 126: 668, 127: 683, 128: 687, 129: 697,
}
const sub2Bars = yellowTops.map((v, i) => ({
  x: Math.round(7 + 12.845 * i) + 0.5,
  yellow: 1030 + v / 3,
  red: redTops[i] ? 1030 + redTops[i] / 3 : 0,
}))

const floatLine = [
  pts(z11, [12, 385, 80, 410, 120, 485, 180, 600, 230, 540, 380, 375, 500, 445, 600, 420, 730, 320, 850, 280, 1015, 280, 1080, 325, 1130, 335, 1180, 280, 1300, 285, 1400, 410, 1450, 510, 1520, 525, 1568, 490]),
  pts(z12, [0, 495, 50, 465, 100, 420, 200, 375, 270, 335, 390, 345, 500, 245, 540, 260, 600, 360, 625, 430, 660, 462, 690, 450, 740, 400, 760, 370, 790, 362, 850, 340, 900, 315, 1000, 292, 1030, 280, 1075, 305, 1140, 290, 1180, 248, 1250, 270, 1285, 350, 1330, 375]),
].join(' ')
const whiteLines = [
  pts(z11, [12, 448, 65, 448, 90, 410, 120, 350, 150, 265, 170, 228, 190, 218, 235, 275, 280, 312, 330, 372, 360, 420, 385, 462, 420, 465, 445, 440, 470, 435, 500, 380, 525, 378, 590, 420, 630, 450, 670, 455, 710, 490, 745, 520, 790, 548, 840, 570, 1015, 570, 1050, 530, 1090, 493, 1120, 493, 1165, 535, 1205, 562, 1240, 550, 1300, 545, 1340, 490, 1370, 465, 1400, 415, 1445, 312, 1475, 312, 1510, 292, 1540, 315, 1568, 332]),
  pts(z12, [0, 327, 25, 330, 70, 375, 115, 415, 175, 428, 230, 475, 280, 487, 330, 480, 390, 475, 430, 515, 490, 570, 530, 580, 560, 600, 600, 655, 655, 710, 740, 708, 775, 685, 800, 655, 860, 655, 885, 670, 908, 710, 1040, 710]),
  pts(z12, [1155, 712, 1175, 710, 1205, 660, 1235, 635, 1280, 530, 1300, 508, 1330, 480]),
]

const axisLabels = [
  { t: '9.00', y: 140.5 }, { t: '8.75', y: 179.7 }, { t: '8.50', y: 218.9 }, { t: '8.25', y: 258.1 },
  { t: '8.00', y: 297.3 }, { t: '7.75', y: 336.5 }, { t: '7.50', y: 375.7 }, { t: '7.25', y: 414.9 },
  { t: '7.00', y: 454.1 }, { t: '6.75', y: 493.3 }, { t: '6.50', y: 532.5 },
  { t: '100.0', y: 652 }, { t: '90.00', y: 690 }, { t: '80.00', y: 727 }, { t: '70.00', y: 764 }, { t: '60.00', y: 801 },
  { t: '50.00', y: 838 }, { t: '40.00', y: 874 }, { t: '30.00', y: 911 }, { t: '20.00', y: 948 },
  { t: '100.0', y: 1060 }, { t: '80.00', y: 1102 }, { t: '60.00', y: 1146 }, { t: '40.00', y: 1188 }, { t: '20.00', y: 1231 },
]

const legends: { x: number; y: number; t: string; c: string; s?: string }[] = [
  { x: 4, y: 87, t: '狮头股份(日线)', c: '#c0c0c0', s: 't18' },
  { x: 157, y: 87, t: '启富 主图', c: '#c0c0c0', s: 't18' },
  { x: 317, y: 86, t: 'PM: 7.56', c: '#707070' },
  { x: 410, y: 86, t: ': 7.56', c: '#0000e0' },
  { x: 568, y: 86, t: 'MA5: 7.56', c: '#ff00ff' },
  { x: 670, y: 86, t: 'MA10: 7.80', c: '#ff50c0' },
  { x: 782, y: 86, t: 'MA20: 8.10', c: '#50b0f0' },
  { x: 894, y: 86, t: 'MA60: 7.53', c: '#80e000' },
  { x: 1006, y: 86, t: 'MA120: 7.16', c: '#808080' },
  { x: 1130, y: 86, t: 'MA250: 7.07', c: '#0000e0' },
  { x: 8, y: 125, t: '【所属板块】', c: '#c0c000', s: 't18' },
  { x: 141, y: 125, t: '[行业]—互联网', c: '#c0c000', s: 't18' },
  { x: 281, y: 125, t: '[地域]—山西板块', c: '#c0c000', s: 't18' },
  { x: 438, y: 125, t: '[概念]—跨境电商', c: '#c0c000', s: 't18' },
  { x: 8, y: 177, t: '【智能解盘】', c: '#00e8e8', s: 't18' },
  { x: 137, y: 177, t: '该股趋势不明，股价偏弱，注意量能变化，目前不宜参与。', c: '#00e8e8', s: 't18' },
  { x: 27, y: 641, t: '启富 主力趋势', c: '#c0c0c0', s: 't18' },
  { x: 155, y: 641, t: '主力趋势: 37.81', c: '#5bb8e8', s: 't18' },
  { x: 304, y: 641, t: '压力位: 100.00', c: '#e01010', s: 't18' },
  { x: 432, y: 641, t: '支撑位: 0.00', c: '#00c000', s: 't18' },
  { x: 540, y: 641, t: '中界: 50.00', c: '#0090e0', s: 't18' },
  { x: 645, y: 641, t: 'A: 92.00', c: '#d08030', s: 't18' },
  { x: 720, y: 641, t: 'B: 8.00', c: '#d08030', s: 't18' },
  { x: 27, y: 1049, t: '神龙入海(5,30)', c: '#c0c0c0', s: 't18' },
  { x: 161, y: 1049, t: '获利: 6.05', c: '#e01010', s: 't18' },
  { x: 272, y: 1049, t: '套牢: 39.38', c: '#d8d8d8', s: 't18' },
  { x: 394, y: 1049, t: '浮动: 54.57', c: '#e8e800', s: 't18' },
]

const arrows = [
  { x: 393, y: 72, up: false }, { x: 462, y: 72, up: false }, { x: 653, y: 72, up: false }, { x: 766, y: 72, up: false },
  { x: 878, y: 72, up: false }, { x: 991, y: 72, up: true }, { x: 1114, y: 72, up: true }, { x: 1237, y: 72, up: true },
  { x: 289, y: 626, up: false }, { x: 250, y: 1034, up: false }, { x: 371, y: 1034, up: true }, { x: 492, y: 1034, up: false },
]

const asks = [
  ['卖五 ¥', '7.57', '3.9', 'c-red'], ['卖四', '7.56', '6.0', 'c-white'], ['卖三', '7.55', '6.5', 'c-green'],
  ['卖二', '7.54', '5.7', 'c-green'], ['卖一', '7.53', '1.7', 'c-green'],
]
const bids = [['买一', '7.52', '48.1'], ['买二', '7.51', '3.2'], ['买三', '7.49', '3.8'], ['买四', '7.48', '1.9'], ['买五', '7.47', '4.7']]
const stats1 = [
  ['今开', '7.75', 'c-red', '均价', '7.53', 'c-green'],
  ['最高', '7.79', 'c-red', '量比', '0.57', 'c-green'],
  ['最低', '7.34', 'c-green', '市值', '17.3亿', 'c-gray'],
  ['现量', '337', 'c-white', '总量', '26328', 'c-gray'],
  ['外盘', '11365', 'c-red', '内盘', '14963', 'c-green'],
]
const stats2 = [
  ['换手', '1.14%', '股本', '2.30亿'],
  ['净资', '1.87', '流通', '2.30亿'],
  ['收益(三)', '0.047', 'PE(动)', '120.1'],
]
const flows = [
  { l: '净流入额', w: 3, bar: '#00e000', v: '-268.3万', p: '-14%', c: 'c-green' },
  { l: '大宗流入', w: 2, bar: '#d0d0d0', v: '0.00', p: '0%', c: 'c-white' },
  { l: '5日净流入额', w: 36, bar: '#00e000', v: '-2372万', p: '-17%', c: 'c-green' },
  { l: '5日大宗流入', w: 8, bar: '#00e000', v: '-516.0万', p: '-4%', c: 'c-green' },
]
const ticks = [
  ['14:55', '7.50', '0.5', 'B', '2'], ['14:55', '7.52', '3.7', 'B', '6'], ['14:55', '7.53', '0.2', 'B', '2'],
  ['14:55', '7.53', '0.8', 'S', '3'], ['14:55', '7.53', '0.2', 'S', '1'], ['14:55', '7.53', '9.9', 'S', '3'],
  ['14:55', '7.53', '2.3', 'B', '7'], ['14:55', '7.53', '0.8', 'B', '1'], ['14:56', '7.52', '1.6', 'S', '2'],
  ['14:56', '7.53', '0.1', 'B', '1'], ['14:56', '7.52', '2.3', 'S', '2'], ['14:56', '7.51', '0.2', 'S', '1'],
  ['14:56', '7.51', '0.1', 'S', '1'], ['14:56', '7.51', '0.1', 'S', '1'], ['14:56', '7.51', '0.1', 'S', '1'],
  ['14:56', '7.53', '3.5', 'B', '2'], ['14:56', '7.53', '1.4', 'S', '2'], ['14:56', '7.52', '2.2', 'S', '2'],
  ['14:56', '7.52', '2.1', 'S', '2'], ['14:56', '7.52', '0.4', 'B', '1'], ['15:00', '7.52', '25.3', '', '18'],
]

const iconBoxes = [150, 189, 223, 257, 293, 327, 362, 396, 431, 466, 499, 546]
const sideLabels = [
  { t: '1', y: 800 }, { t: '5', y: 834 }, { t: '15', y: 868 }, { t: '30', y: 903 }, { t: '60', y: 938 },
  { t: '日', y: 974 }, { t: '周', y: 1008 }, { t: '月', y: 1042 }, { t: 'N', y: 1076 }, { t: '多', y: 1111 },
  { t: '季', y: 1146 }, { t: '年', y: 1180 },
]

const statusItems = [
  ['上证', 'st-lb'], ['3361.44', 'st-g'], ['-32.81', 'st-g'], ['-0.97%', 'st-g'], ['3538亿', 'st-k'],
  ['沪深', 'st-lb'], ['4563.77', 'st-g'], ['-56.11', 'st-g'], ['-1.21%', 'st-g'], ['2640亿', 'st-k'],
  ['创业', 'st-lb'], ['2908.94', 'st-r'], ['2.18', 'st-r'], ['0.07%', 'st-r'], ['1811亿', 'st-k'],
  ['', 'st-sep'], ['总成交', 'st-lb'], ['8', 'st-k'],
]
</script>

<style>
html,
body {
  margin: 0;
  background: #000;
  overflow: hidden;
}
</style>

<style scoped>
.terminal {
  position: relative;
  width: 2160px;
  height: 1395px;
  overflow: hidden;
  background: #000;
  font-family: "Liberation Sans", "Noto Sans CJK SC", sans-serif;
  color: #c0c0c0;
}

/* title bar */
.titlebar {
  display: flex;
  align-items: center;
  height: 33px;
  background: #f0f0f0;
  border-bottom: 3px solid #a0a0a0;
  color: #3c3c3c;
  font-size: 18px;
  white-space: nowrap;
}
.titlebar > * {
  flex: none;
}
.logo {
  width: 25px;
  height: 25px;
  margin-left: 5px;
}
.brand {
  margin-left: 5px;
  width: 126px;
}
.menu {
  display: flex;
  gap: 36px;
  margin-left: 46px;
}
.menu span {
  flex: none;
}
.login {
  margin-left: 271px;
  color: #f01818;
}
.stock-name {
  margin-left: 22px;
}
.menu-right {
  gap: 21px;
  margin-left: 244px;
}
.clock {
  box-sizing: border-box;
  margin-left: 20px;
  padding-left: 3px;
  width: 84px;
  height: 33px;
  line-height: 33px;
  border-left: 2px solid #c0c0c0;
  font-size: 17px;
}
.weekday {
  box-sizing: border-box;
  width: 40px;
  height: 33px;
  line-height: 33px;
  border-right: 2px solid #c0c0c0;
}
.win-btns {
  margin-left: 7px;
}

/* left column */
.workspace {
  display: flex;
  height: 1322px;
}
.left-col {
  width: 1786px;
  flex: none;
}
.toolbar {
  display: flex;
  align-items: center;
  height: 28px;
  border-bottom: 2px solid #a00000;
  font-size: 18px;
}
.tool-toggle {
  display: flex;
  align-items: center;
  justify-content: center;
  width: 34px;
  height: 28px;
  border-right: 1px solid #a00000;
}
.toggle-box {
  width: 14px;
  height: 16px;
  border: 2px solid #666;
  border-radius: 2px;
  box-shadow: inset -5px 0 0 #888;
}
.periods {
  display: flex;
  gap: 13px;
  margin-left: 7px;
  white-space: nowrap;
}
.tool-btns {
  display: flex;
  margin-left: auto;
}
.tool-btns span {
  box-sizing: border-box;
  width: 52.6px;
  height: 28px;
  line-height: 28px;
  text-align: center;
  border-left: 1px solid #a00000;
}
.chart {
  display: block;
}
.chart text {
  font-family: "Liberation Sans", "Noto Sans CJK SC", sans-serif;
}
.t16 {
  font-size: 16px;
}
.t17 {
  font-size: 17px;
}
.t18 {
  font-size: 18px;
}
.t20 {
  font-size: 22px;
}
.ln {
  fill: none;
  stroke-linejoin: round;
}
.dots {
  stroke: #a81010;
  stroke-width: 1;
  stroke-dasharray: 2 4;
}
.frame {
  stroke: #a00000;
  stroke-width: 2;
}

/* date + tabs */
.date-row {
  position: relative;
  box-sizing: border-box;
  height: 24px;
  line-height: 21px;
  border-top: 2px solid #a00000;
  border-bottom: 2px solid #a00000;
  font-size: 18px;
  color: #e02020;
}
.date-tick {
  position: absolute;
  top: 0;
  width: 1px;
  height: 4px;
  background: #a00000;
}
.date-year {
  position: absolute;
  left: 7px;
}
.date-mark {
  position: absolute;
  height: 20px;
  padding-left: 2px;
  border-left: 1px solid #a00000;
}
.m8 {
  left: 107px;
}
.m10 {
  left: 647px;
}
.m11 {
  left: 853px;
}
.m12 {
  left: 1136px;
}
.m1 {
  left: 1431px;
}
.date-cur {
  position: absolute;
  left: 331px;
  width: 117px;
  height: 20px;
  text-align: center;
  background: #000080;
  color: #c0c8f0;
  font-size: 17px;
}
.date-kind {
  position: absolute;
  left: 1729px;
  color: #b0b0b0;
}
.tabs {
  display: flex;
  box-sizing: border-box;
  height: 25px;
  padding-left: 2px;
  border-bottom: 2px solid #a00000;
  font-size: 18px;
  white-space: nowrap;
}
.tabs span {
  padding: 3px 5px 0;
  line-height: 20px;
  border-right: 1px solid #a00000;
}
.tabs .tab-tail {
  margin-left: 672px;
  border-left: 1px solid #a00000;
}
.tabs-last {
  height: 27px;
}
.tabs-last span {
  padding-top: 4px;
}

/* quote panel */
.quote {
  box-sizing: border-box;
  width: 337px;
  flex: none;
  height: 1322px;
  overflow: hidden;
  border-left: 2px solid #a00000;
  padding-left: 3px;
  padding-right: 4px;
  font-size: 22px;
  line-height: 1;
}
.q-name {
  display: flex;
  align-items: flex-end;
  height: 34px;
  padding-left: 50px;
  margin-top: 0;
}
.q-title {
  color: #00d8ff;
  font-size: 28px;
  font-weight: bold;
}
.q-code {
  margin-left: 10px;
  font-size: 20px;
  color: #c0c0c0;
  padding-bottom: 2px;
}
.q-price {
  display: flex;
  justify-content: space-between;
  align-items: center;
  height: 49px;
  color: #00e000;
  font-size: 28px;
  font-weight: bold;
  padding-top: 6px;
  box-sizing: border-box;
}
.q-change {
  display: flex;
  align-items: center;
  gap: 1px;
  margin-left: 56px;
}
.q-sec {
  margin-left: -3px;
  margin-right: -4px;
  padding-left: 3px;
  padding-right: 4px;
  border-top: 2px solid #a00000;
}
.q-row {
  display: flex;
  align-items: center;
  height: 27.2px;
}
.lb {
  font-weight: normal;
  font-size: 22px;
  white-space: nowrap;
  color: #c0c0c0;
}
b {
  font-size: 20px;
}
i {
  font-style: normal;
  font-weight: normal;
  font-size: 22px;
}
.q-row .lb {
  width: 0;
}
.q-row .px {
  margin-left: 160px;
  width: 0;
  direction: rtl;
}
.vol {
  margin-left: auto;
}
.q-bids {
  border-top: 2px solid;
  border-image: linear-gradient(to right, #b08020 73%, #2870a8 73%) 1;
}
.q-asks {
  height: 136px;
}
.q-bids {
  height: 138px;
}
.stat-row {
  display: flex;
  gap: 8px;
  height: 28.7px;
  align-items: center;
}
.stat-row > div {
  display: flex;
  justify-content: space-between;
  align-items: center;
  width: 160px;
}
.stat-tight {
  height: 28.4px;
}
.q-stats {
  height: 144px;
}
.q-stats2 {
  height: 90px;
}
.flow-row {
  display: grid;
  grid-template-columns: 138px 128px 62px;
  align-items: center;
  height: 28.4px;
}
.flow-row > b {
  text-align: right;
}
.flow-val {
  display: flex;
  align-items: center;
  justify-content: space-between;
}
.flow-bar {
  height: 9px;
}
.q-flow {
  height: 118px;
  padding-top: 1px;
  box-sizing: border-box;
  border-bottom: 2px solid #a00000;
  border-top: 2px solid #a00000;
}
.ticks {
  margin-top: 1px;
}
.tick {
  display: grid;
  grid-template-columns: 117px 50px 83px 17px 20px 41px;
  align-items: center;
  height: 27.1px;
}
.tick b {
  letter-spacing: 0.5px;
}
.tick-vol {
  text-align: right;
}
.tick-bs {
  grid-column: 5;
}
.tick-n {
  text-align: right;
}
.c-red {
  color: #ff2c2c;
}
.c-green {
  color: #00e000;
}
.c-white {
  color: #f0f0f0;
}
.c-gray {
  color: #c0c0c0;
}
.c-yellow {
  color: #c8c800;
}
.c-cyan {
  color: #20e8e8;
}

/* sidebar */
.sidebar {
  width: 37px;
  flex: none;
  background: #f0f0f0;
}
.side-svg {
  display: block;
}
.side-svg text {
  font-family: "Liberation Sans", "Noto Sans CJK SC", sans-serif;
}
.side-t {
  font-size: 13px;
}
.side-c {
  font-size: 15px;
  font-weight: bold;
}
.side-r {
  font-size: 14px;
  font-weight: bold;
}
.side-s {
  font-size: 24px;
  font-weight: bold;
}
.side-n {
  font-size: 17px;
}

/* status bar */
.statusbar {
  display: grid;
  grid-template-columns: 54px 94px 81px 87px 96px 53px 95px 80px 87px 96px 55px 107px 69px 86px 97px 6px 82px auto;
  align-items: center;
  box-sizing: border-box;
  height: 37px;
  padding-left: 25px;
  background: #f0f0f0;
  font-size: 21px;
  white-space: nowrap;
}
.status-icon {
  position: absolute;
  left: 2px;
  top: 1363px;
}
.st-lb {
  color: #404040;
  font-size: 22px;
}
.st-g {
  color: #109010;
}
.st-r {
  color: #f02020;
}
.st-k {
  color: #101010;
}
.st-sep {
  height: 34px;
  border-left: 2px solid #c0c0c0;
}

/* watermark */
.watermark {
  position: absolute;
  left: 1360px;
  top: 1314px;
  display: flex;
  align-items: center;
  width: 800px;
  height: 81px;
  background: #7fa9d8;
}
.wm-cn {
  margin-left: 17px;
  width: 280px;
  color: #10108c;
  font-size: 56px;
  font-weight: bold;
  white-space: nowrap;
}
.wm-logo {
  margin-left: 24px;
}
.wm-glyph {
  font-family: "Noto Sans CJK SC", sans-serif;
  font-size: 46px;
  font-weight: bold;
}
.wm-url {
  margin-left: 9px;
  color: #fff;
  font-family: "DejaVu Serif", serif;
  font-size: 54px;
  font-weight: bold;
  -webkit-text-stroke: 1px #fff;
  white-space: nowrap;
}
</style>
